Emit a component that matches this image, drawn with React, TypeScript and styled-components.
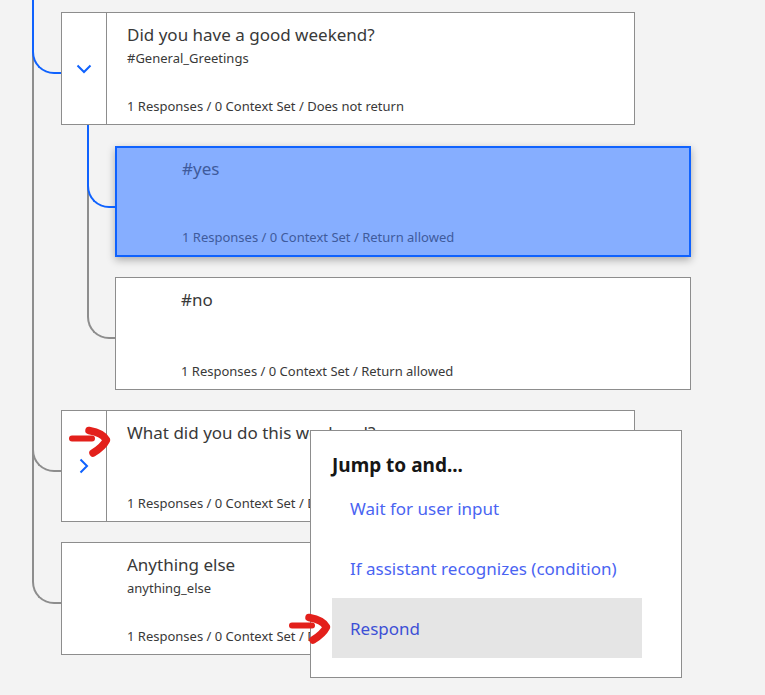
import React from 'react';
import styled, { createGlobalStyle } from 'styled-components';

const GlobalStyle = createGlobalStyle`
  html, body {
    margin: 0;
    padding: 0;
    background: #f3f3f3;
  }
  body {
    font-family: "Noto Sans", "Open Sans", sans-serif;
    color: #393939;
  }
`;

const Page = styled.div`
  position: relative;
  width: 765px;
  height: 695px;
  overflow: hidden;
  background: #f3f3f3;
`;

const Branch = styled.div<{ $indent: number }>`
  display: flex;
  flex-direction: column;
  margin-left: ${props => props.$indent}px;
`;

const Node = styled.div<{ $pad: number; $active?: boolean; $last?: boolean; $reach: number }>`
  position: relative;
  padding-top: ${props => props.$pad}px;

  &::after {
    content: '';
    display: ${props => (props.$last ? 'none' : 'block')};
    position: absolute;
    left: -${props => props.$reach}px;
    top: 0;
    bottom: 0;
    border-left: 2px solid #8d8d8d;
  }

  &::before {
    content: '';
    position: absolute;
    z-index: 1;
    left: -${props => props.$reach}px;
    top: 0;
    width: ${props => props.$reach}px;
    height: ${props => props.$pad + 62}px;
    box-sizing: border-box;
    border-left: 2px solid ${props => (props.$active ? '#0f62fe' : '#8d8d8d')};
    border-bottom: 2px solid ${props => (props.$active ? '#0f62fe' : '#8d8d8d')};
    border-bottom-left-radius: 22px;
  }
`;

const Card = styled.div<{ $width: number; $height: number; $selected?: boolean }>`
  display: flex;
  width: ${props => props.$width}px;
  height: ${props => props.$height}px;
  box-sizing: border-box;
  background: ${props => (props.$selected ? '#86aeff' : '#ffffff')};
  border: ${props => (props.$selected ? '2px solid #0f62fe' : '1px solid #8d8d8d')};
  box-shadow: ${props => (props.$selected ? '0 3px 8px rgba(0, 0, 0, 0.3)' : 'none')};
`;

const Toggle = styled.div<{ $divider?: boolean }>`
  flex: none;
  width: 45px;
  box-sizing: border-box;
  border-right: 1px solid ${props => (props.$divider ? '#8d8d8d' : 'transparent')};
  display: flex;
  align-items: center;
  justify-content: center;
`;

const Body = styled.div<{ $selected?: boolean }>`
  flex: 1;
  min-width: 0;
  display: flex;
  flex-direction: column;
  padding: ${props => (props.$selected ? '10px' : '11px')} 20px 10px 20px;
  color: ${props => (props.$selected ? '#3f5b9c' : '#393939')};
`;

const Title = styled.div`
  font-size: 17px;
  line-height: 22px;
  white-space: nowrap;
`;

const Tag = styled.div`
  margin-top: 4px;
  font-size: 13px;
  line-height: 16px;
`;

const Meta = styled.div`
  margin-top: auto;
  font-size: 13px;
  line-height: 16px;
  white-space: nowrap;
`;

const Menu = styled.div`
  position: absolute;
  z-index: 5;
  left: 249px;
  top: 40px;
  width: 372px;
  box-sizing: border-box;
  padding: 21px 39px 19px 21px;
  background: #ffffff;
  border: 1px solid #8d8d8d;
`;

const MenuTitle = styled.div`
  font-size: 19px;
  font-weight: 700;
  line-height: 26px;
  color: #161616;
`;

const MenuItem = styled.div<{ $hover?: boolean }>`
  height: 60px;
  padding-left: 18px;
  display: flex;
  align-items: center;
  font-size: 17px;
  color: ${props => (props.$hover ? '#3d50d6' : '#4a64f2')};
  background: ${props => (props.$hover ? '#e5e5e5' : 'transparent')};
`;

const Mark = styled.svg<{ $x: number; $y: number }>`
  position: absolute;
  z-index: 10;
  left: ${props => props.$x}px;
  top: ${props => props.$y}px;
`;

const ChevronDown = () => (
  <svg width="16" height="10" viewBox="0 0 16 10">
    <polyline points="1.5,1.5 8,8 14.5,1.5" fill="none" stroke="#0f62fe" strokeWidth="2" />
  </svg>
);

const ChevronRight = () => (
  <svg width="10" height="16" viewBox="0 0 10 16">
    <polyline points="1.5,1.5 8,8 1.5,14.5" fill="none" stroke="#0f62fe" strokeWidth="2" />
  </svg>
);

// red hand-drawn pointer marks from the annotated screenshot
const RedArrow = ({ x, y }: { x: number; y: number }) => (
  <Mark $x={x} $y={y} width="46" height="34" viewBox="0 0 46 34">
    <path d="M5 12.5 L25 12.5" stroke="#e3201b" strokeWidth="6" strokeLinecap="round" fill="none" />
    <path
      d="M22 4.5 Q36 7 39.5 14 Q36 21 26 27"
      stroke="#e3201b"
      strokeWidth="7.5"
      strokeLinecap="round"
      strokeLinejoin="round"
      fill="none"
    />
  </Mark>
);

interface NodeCardProps {
  title: string;
  tag?: string;
  meta: string;
  width: number;
  height: number;
  selected?: boolean;
  divider?: boolean;
  toggle?: 'down' | 'right';
}

const NodeCard = ({ title, tag, meta, width, height, selected, divider, toggle }: NodeCardProps) => (
  <Card $width={width} $height={height} $selected={selected}>
    <Toggle $divider={divider}>
      {toggle === 'down' && <ChevronDown />}
      {toggle === 'right' && <ChevronRight />}
    </Toggle>
    <Body $selected={selected}>
      <Title>{title}</Title>
      {tag && <Tag>{tag}</Tag>}
      <Meta>{meta}</Meta>
    </Body>
  </Card>
);

const App = () => {
  return (
    <Page>
      <GlobalStyle />
      <Branch $indent={61}>
        <Node $pad={12} $reach={29} $active>
          <NodeCard
            width={574}
            height={113}
            divider
            toggle="down"
            title="Did you have a good weekend?"
            tag="#General_Greetings"
            meta="1 Responses / 0 Context Set / Does not return"
          />
          <Branch $indent={54}>
            <Node $pad={21} $reach={28} $active>
              <NodeCard
                width={576}
                height={111}
                selected
                title="#yes"
                meta="1 Responses / 0 Context Set / Return allowed"
              />
            </Node>
            <Node $pad={20} $reach={28} $last>
              <NodeCard
                width={576}
                height={113}
                title="#no"
                meta="1 Responses / 0 Context Set / Return allowed"
              />
            </Node>
          </Branch>
        </Node>
        <Node $pad={20} $reach={29}>
          <NodeCard
            width={574}
            height={112}
            divider
            toggle="right"
            title="What did you do this weekend?"
            meta="1 Responses / 0 Context Set / Does not return"
          />
          <Menu>
            <MenuTitle>Jump to and...</MenuTitle>
            <MenuItem>Wait for user input</MenuItem>
            <MenuItem>If assistant recognizes (condition)</MenuItem>
            <MenuItem $hover>Respond</MenuItem>
          </Menu>
        </Node>
        <Node $pad={20} $reach={29} $last>
          <NodeCard
            width={574}
            height={113}
            title="Anything else"
            tag="anything_else"
            meta="1 Responses / 0 Context Set / Does not return"
          />
        </Node>
      </Branch>
      <RedArrow x={67} y={426} />
      <RedArrow x={287} y={613} />
    </Page>
  );
};

export default App;
